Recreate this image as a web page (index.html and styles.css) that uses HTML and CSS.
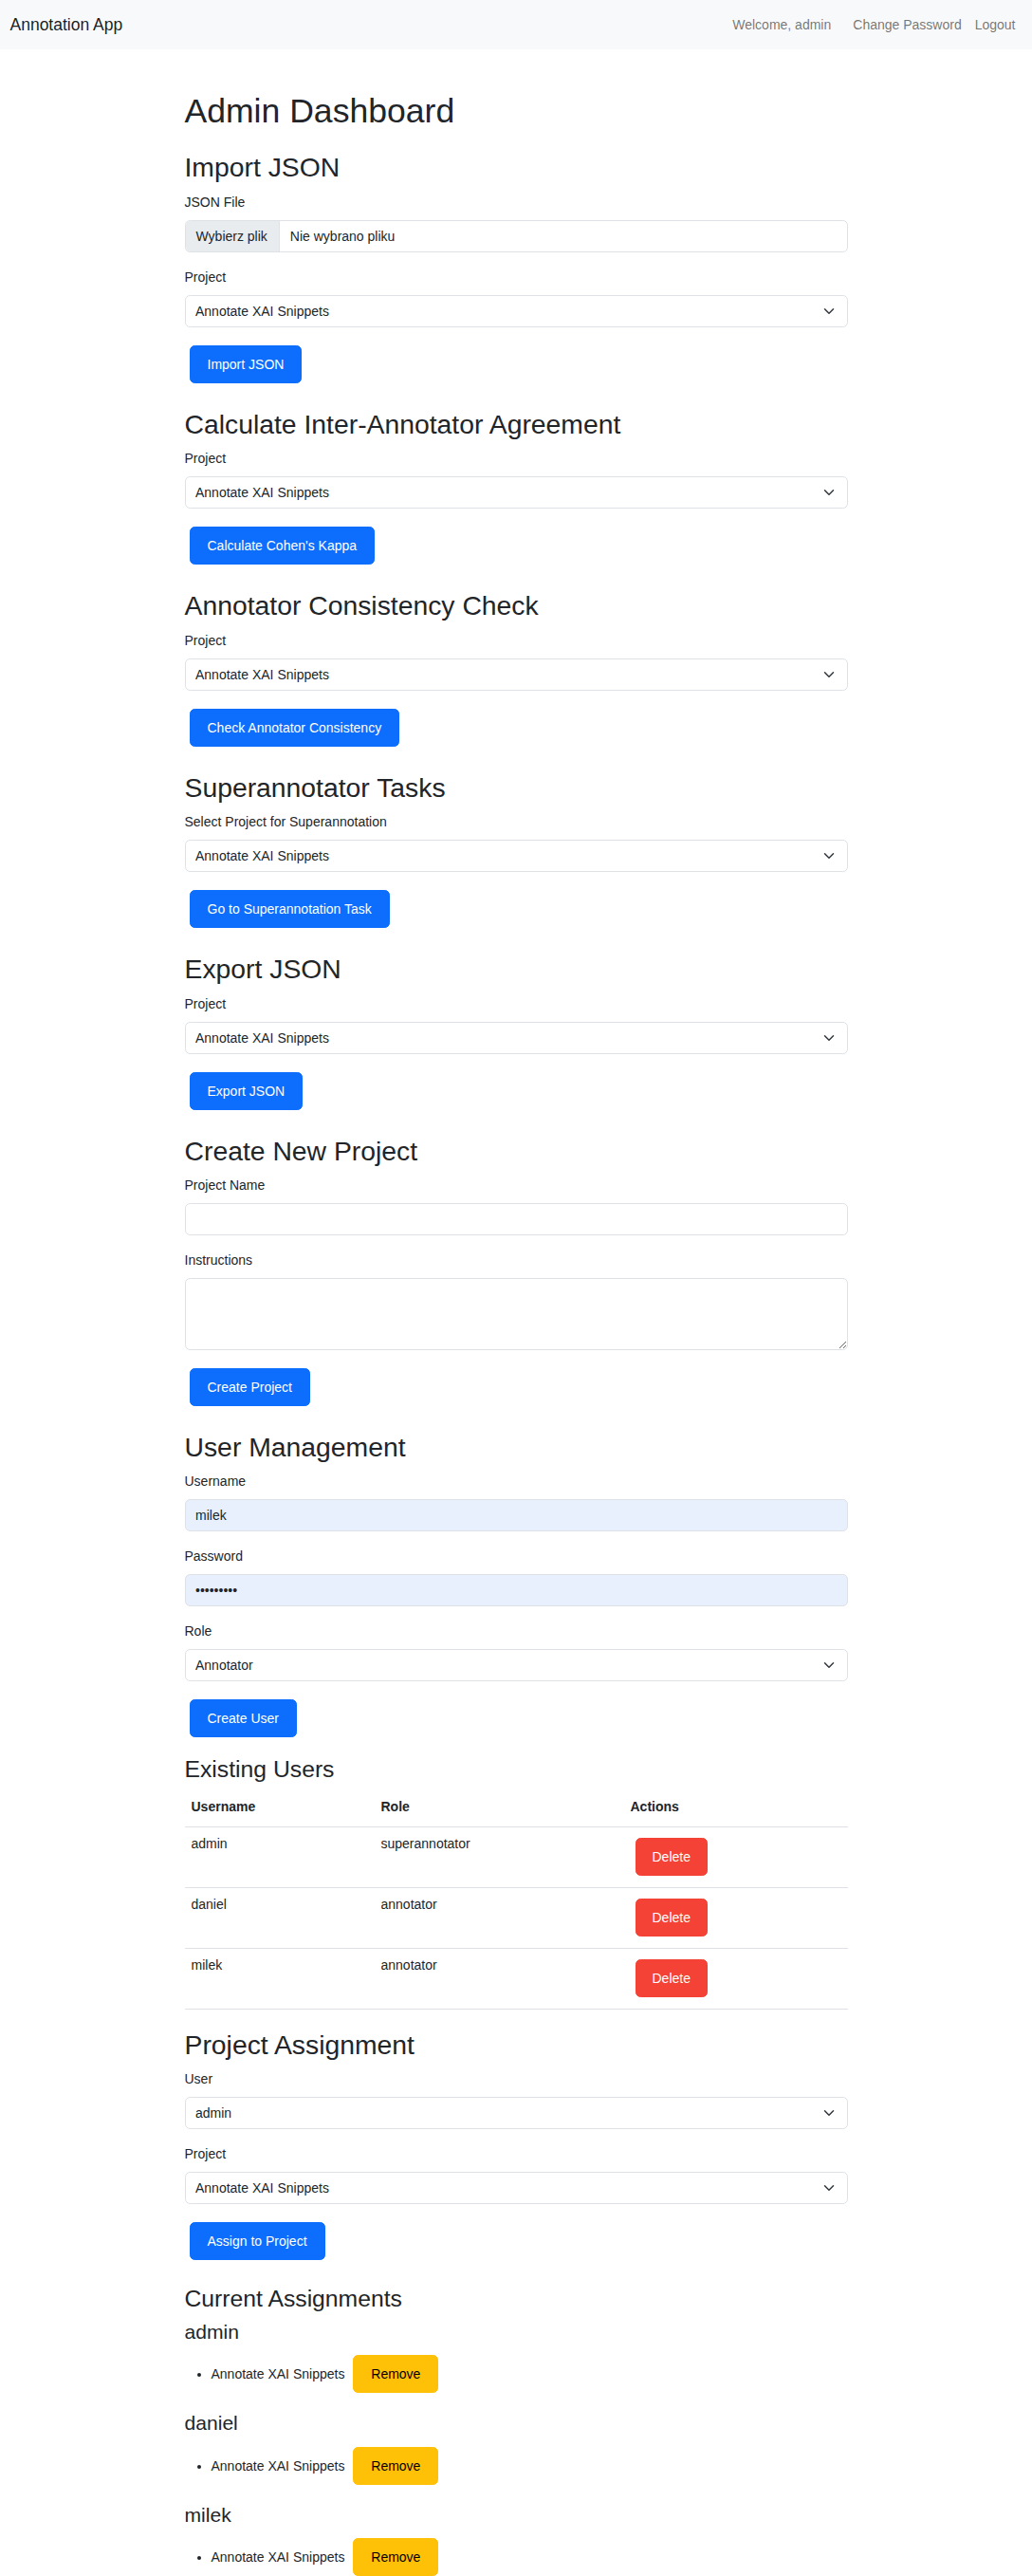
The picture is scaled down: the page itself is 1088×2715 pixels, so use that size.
FILE: index.html
```html
<!DOCTYPE html>
<html lang="en">
<head>
<meta charset="utf-8">
<title>Admin Dashboard</title>
<link rel="stylesheet" href="styles.css">
</head>
<body>
<nav class="navbar">
  <a class="brand" href="#">Annotation App</a>
  <div class="nav-right">
    <span class="welcome">Welcome, admin</span>
    <a class="nav-link" href="#">Change Password</a>
    <a class="nav-link" href="#">Logout</a>
  </div>
</nav>

<main class="container">
  <h1 class="page-title">Admin Dashboard</h1>

  <h2 class="section-title">Import JSON</h2>
  <form class="form">
    <div class="group">
      <label class="label">JSON File</label>
      <div class="file-input"><span class="file-btn">Wybierz plik</span><span class="file-name">Nie wybrano pliku</span></div>
    </div>
    <div class="group">
      <label class="label">Project</label>
      <select class="select"><option>Annotate XAI Snippets</option></select>
    </div>
    <button type="button" class="btn btn-primary">Import JSON</button>
  </form>

  <h2 class="section-title">Calculate Inter-Annotator Agreement</h2>
  <form class="form">
    <div class="group">
      <label class="label">Project</label>
      <select class="select"><option>Annotate XAI Snippets</option></select>
    </div>
    <button type="button" class="btn btn-primary">Calculate Cohen's Kappa</button>
  </form>

  <h2 class="section-title">Annotator Consistency Check</h2>
  <form class="form">
    <div class="group">
      <label class="label">Project</label>
      <select class="select"><option>Annotate XAI Snippets</option></select>
    </div>
    <button type="button" class="btn btn-primary">Check Annotator Consistency</button>
  </form>

  <h2 class="section-title">Superannotator Tasks</h2>
  <form class="form">
    <div class="group">
      <label class="label">Select Project for Superannotation</label>
      <select class="select"><option>Annotate XAI Snippets</option></select>
    </div>
    <button type="button" class="btn btn-primary">Go to Superannotation Task</button>
  </form>

  <h2 class="section-title">Export JSON</h2>
  <form class="form">
    <div class="group">
      <label class="label">Project</label>
      <select class="select"><option>Annotate XAI Snippets</option></select>
    </div>
    <button type="button" class="btn btn-primary">Export JSON</button>
  </form>

  <h2 class="section-title">Create New Project</h2>
  <form class="form">
    <div class="group">
      <label class="label">Project Name</label>
      <input class="input" type="text">
    </div>
    <div class="group">
      <label class="label">Instructions</label>
      <textarea class="input textarea" rows="3"></textarea>
    </div>
    <button type="button" class="btn btn-primary">Create Project</button>
  </form>

  <h2 class="section-title">User Management</h2>
  <form class="form form-tight">
    <div class="group">
      <label class="label">Username</label>
      <input class="input autofilled" type="text" value="milek">
    </div>
    <div class="group">
      <label class="label">Password</label>
      <input class="input autofilled" type="password" value="milek1234">
    </div>
    <div class="group">
      <label class="label">Role</label>
      <select class="select"><option>Annotator</option></select>
    </div>
    <button type="button" class="btn btn-primary">Create User</button>
  </form>

  <h3 class="sub-title">Existing Users</h3>
  <table class="table">
    <thead>
      <tr><th class="col-user">Username</th><th class="col-role">Role</th><th>Actions</th></tr>
    </thead>
    <tbody>
      <tr><td>admin</td><td>superannotator</td><td><button type="button" class="btn btn-danger">Delete</button></td></tr>
      <tr><td>daniel</td><td>annotator</td><td><button type="button" class="btn btn-danger">Delete</button></td></tr>
      <tr><td>milek</td><td>annotator</td><td><button type="button" class="btn btn-danger">Delete</button></td></tr>
    </tbody>
  </table>

  <h2 class="section-title">Project Assignment</h2>
  <form class="form">
    <div class="group">
      <label class="label">User</label>
      <select class="select"><option>admin</option></select>
    </div>
    <div class="group">
      <label class="label">Project</label>
      <select class="select"><option>Annotate XAI Snippets</option></select>
    </div>
    <button type="button" class="btn btn-primary">Assign to Project</button>
  </form>

  <h3 class="sub-title">Current Assignments</h3>
  <h4 class="user-title">admin</h4>
  <ul class="assign-list">
    <li>Annotate XAI Snippets <button type="button" class="btn btn-warning">Remove</button></li>
  </ul>
  <h4 class="user-title">daniel</h4>
  <ul class="assign-list">
    <li>Annotate XAI Snippets <button type="button" class="btn btn-warning">Remove</button></li>
  </ul>
  <h4 class="user-title">milek</h4>
  <ul class="assign-list">
    <li>Annotate XAI Snippets <button type="button" class="btn btn-warning">Remove</button></li>
  </ul>
</main>
</body>
</html>
```

FILE: styles.css
```css
* { box-sizing: border-box; }

html, body {
  margin: 0;
  padding: 0;
}

body {
  font-family: "Liberation Sans", Arial, sans-serif;
  font-size: 14px;
  line-height: 21px;
  color: #212529;
  background: #ffffff;
}

.navbar {
  height: 52px;
  background: #f8f9fa;
  display: flex;
  align-items: center;
  padding: 0 10.5px;
}

.brand {
  font-size: 17.5px;
  line-height: 26px;
  color: rgba(0, 0, 0, 0.9);
  text-decoration: none;
}

.nav-right {
  margin-left: auto;
  display: flex;
  align-items: center;
}

.welcome {
  color: rgba(0, 0, 0, 0.55);
  margin-right: 16px;
}

.nav-link {
  color: rgba(0, 0, 0, 0.55);
  text-decoration: none;
  padding: 0 7px;
}

.container {
  max-width: 720px;
  margin: 43.6px auto 0;
  padding: 0 10.5px;
}

.page-title,
.section-title,
.sub-title,
.user-title {
  margin: 0 0 7px;
  font-weight: 500;
  line-height: 1.2;
}

.page-title {
  font-size: 35.57px;
  margin-bottom: 21px;
}

.section-title {
  font-size: 28.34px;
  margin-bottom: 7.5px;
}
.sub-title { font-size: 24.73px; }
.user-title { font-size: 21.1px; }

.form {
  display: flex;
  flex-direction: column;
  align-items: flex-start;
  margin-bottom: 21px;
}

.form-tight { margin-bottom: 14px; }

.group {
  width: 100%;
  margin-bottom: 14px;
}

.label {
  display: block;
  line-height: 24px;
  margin-bottom: 7px;
}

.input,
.select,
.file-input {
  display: block;
  width: 100%;
  height: 34px;
  border: 1px solid #dee2e6;
  border-radius: 5.25px;
  font-family: inherit;
  font-size: 14px;
  color: #212529;
  background-color: #ffffff;
  padding: 0 10.5px;
}

.input.autofilled {
  background-color: #e8f0fe;
}

.textarea {
  height: 75.5px;
  padding: 5.25px 10.5px;
  line-height: 21px;
  resize: vertical;
}

.select {
  -webkit-appearance: none;
  appearance: none;
  padding-right: 36px;
  background-image: url("data:image/svg+xml,%3csvg xmlns='http://www.w3.org/2000/svg' viewBox='0 0 16 16'%3e%3cpath fill='none' stroke='%23343a40' stroke-linecap='round' stroke-linejoin='round' stroke-width='2' d='m2 5 6 6 6-6'/%3e%3c/svg%3e");
  background-repeat: no-repeat;
  background-position: right 10.5px center;
  background-size: 16px 12px;
}

.file-input {
  display: flex;
  align-items: stretch;
  padding: 0;
  overflow: hidden;
}

.file-btn {
  background: #e9ecef;
  border-right: 1px solid #dee2e6;
  padding: 0 12px 0 11px;
  line-height: 32px;
}

.file-name {
  padding: 0 11px;
  line-height: 32px;
}

.btn {
  display: inline-block;
  height: 40px;
  margin: 5px;
  padding: 0 18px;
  border: 1px solid transparent;
  border-radius: 5.25px;
  font-family: inherit;
  font-size: 14px;
  line-height: 38px;
  vertical-align: baseline;
  cursor: pointer;
}

.btn-primary {
  background: #0d6efd;
  border-color: #0d6efd;
  color: #ffffff;
}

.btn-danger {
  background: #f44336;
  border-color: #f44336;
  color: #ffffff;
  padding: 0 17px;
}

.btn-warning {
  background: #ffc107;
  border-color: #ffc107;
  color: #000000;
}

.table {
  width: 100%;
  border-collapse: collapse;
  margin-bottom: 20px;
}

.table th,
.table td {
  text-align: left;
  vertical-align: top;
  padding: 7px 7px 6px;
  border-bottom: 1px solid #dee2e6;
}

.table th {
  font-weight: 700;
  padding: 7px 7px 10px;
}

.col-user { width: 200px; }
.col-role { width: 263px; }

.table td .btn { margin-top: 4px; margin-bottom: 6px; }

.assign-list {
  margin: 0 0 14px;
  padding-left: 28px;
}
```
